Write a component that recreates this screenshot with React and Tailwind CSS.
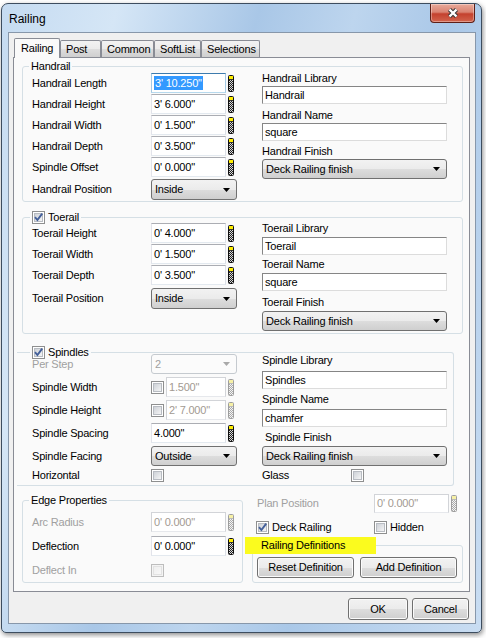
import React from 'react';

const GRAD = 'bg-[linear-gradient(#f2f2f2_0%,#ebebeb_50%,#dddddd_51%,#cfcfcf_100%)]';

function Spinner({ disabled }) {
  const dots = [];
  for (let r = 0; r < 11; r++) {
    for (let c = 0; c < 2; c++) {
      dots.push(
        <rect key={r + '-' + c} x={1 + (r % 2) + c * 2} y={5 + r} width="1" height="1" fill={disabled ? '#aaaaaa' : '#222'} />
      );
    }
  }
  return (
    <svg width="6" height="17" viewBox="0 0 6 17" className="ml-[2px] shrink-0">
      <rect x="0.5" y="0.5" width="5" height="16" rx="1" fill={disabled ? '#f4f4f4' : '#d8d8d8'} stroke={disabled ? '#9e9e9e' : '#111'} />
      <rect x="1" y="1" width="4" height="3" fill={disabled ? '#f6f0a6' : '#ffee00'} />
      <rect x="1" y="4" width="4" height="1" fill={disabled ? '#bbbbbb' : '#333'} />
      {dots}
    </svg>
  );
}

function Check({ checked, disabled }) {
  const id = disabled ? 'cbd' : 'cbn';
  return (
    <svg width="13" height="13" viewBox="0 0 13 13" className="shrink-0">
      <defs>
        <linearGradient id={id} x1="0" y1="0" x2="1" y2="1">
          <stop offset="0" stopColor={disabled ? '#eeeeee' : '#cbcfd5'} />
          <stop offset="1" stopColor={disabled ? '#f8f8f8' : '#f7f7f7'} />
        </linearGradient>
      </defs>
      <rect x="0.5" y="0.5" width="12" height="12" fill={disabled ? '#f4f4f4' : '#fff'} stroke={disabled ? '#bdbdbd' : '#8e8f8f'} />
      <rect x="2.5" y="2.5" width="8" height="8" fill={`url(#${id})`} stroke={disabled ? '#e2e2e2' : '#b8bcc2'} />
      {checked && <path d="M3 6.2L5.4 9L10.2 2.6" fill="none" stroke="#44609a" strokeWidth="1.9" />}
    </svg>
  );
}

// left column number box
function TextBox({ value, className = 'w-[75px] h-[20px]', disabled, focused, selected }) {
  let border = 'border-[#abadb3] border-l-[#e2e3ea] border-r-[#dbdfe6] border-b-[#e3e9ef]';
  if (focused) border = 'border-[#3d7bad] border-l-[#a4c9e3] border-r-[#a4c9e3] border-b-[#b7d9ed]';
  if (disabled) border = 'border-[#d2d4d8] border-b-[#e6e8ec]';
  return (
    <div className={`${className} shrink-0 flex items-center border bg-white pl-[2px] ${border} ${disabled ? 'text-[#a29a92]' : ''}`}>
      {selected ? <span className="bg-[#3399ff] text-white px-[1px] leading-[12px] py-[1px]">{value}</span> : value}
    </div>
  );
}

// right column text field
function Edit({ value, className = '' }) {
  return (
    <div className={`${className} w-[185px] h-[18px] shrink-0 flex items-center pl-[2px] bg-white border border-[#dcdcdc] border-t-[#858585] border-l-[#858585]`}>
      {value}
    </div>
  );
}

function Combo({ value, className = '', disabled }) {
  return (
    <div
      className={`${className} shrink-0 flex items-center justify-between rounded-[3px] border pl-[3px] pr-[6px] ${
        disabled ? 'border-[#c5cacf] bg-[#fbfbfb] text-[#a0a0a0]' : `border-[#707070] ${GRAD}`
      }`}
    >
      <span>{value}</span>
      <svg width="7" height="4" viewBox="0 0 7 4">
        <path d="M0 0H7L3.5 4Z" fill={disabled ? '#a9a9a9' : '#000'} />
      </svg>
    </div>
  );
}

function Btn({ children, className = '' }) {
  return (
    <div className={`${className} shrink-0 flex items-center justify-center rounded-[3px] border border-[#707070] ${GRAD} shadow-[inset_0_0_0_1px_#fbfbfb]`}>
      {children}
    </div>
  );
}

function Row({ label, disabled, children, h = 'h-[20px]', className = '' }) {
  return (
    <div className={`flex items-center ${h} ${className}`}>
      <div className={`w-[119px] shrink-0 ${disabled ? 'text-[#a0a0a0]' : ''}`}>{label}</div>
      {children}
    </div>
  );
}

function Group({ legend, className = '', children, legendClass = 'ml-[6px]' }) {
  return (
    <fieldset className={`m-0 p-0 min-w-0 border border-[#d5dfe5] rounded-[3px] ${className}`}>
      <legend className={`h-[13px] leading-[13px] px-[2px] ${legendClass}`}>{legend}</legend>
      {children}
    </fieldset>
  );
}

function Label({ children, className = '' }) {
  return <div className={`h-[13px] leading-[13px] ${className}`}>{children}</div>;
}

function Tab({ children, className = '' }) {
  return (
    <div className={`${className} h-[17px] border border-b-0 border-[#898c95] rounded-t-[2px] pl-[5px] pt-[1px] leading-[14px] ${GRAD}`}>
      {children}
    </div>
  );
}

export default function App() {
  return (
    <div className="w-[486px] h-[638px] bg-white overflow-hidden font-['Liberation_Sans',Arial,sans-serif] text-[11px] tracking-[-0.2px] text-black">
      <div className="ml-[1px] mt-[3px] w-[481px] h-[630px] rounded-t-[7px] rounded-b-[5px] border border-[#3d4d5f] bg-[linear-gradient(105deg,#c5dbf1_0%,#d5e6f6_18%,#a9c7e7_40%,#bdd5ee_55%,#aac8e8_70%,#c9ddf2_100%)] shadow-[1px_2px_5px_rgba(0,0,0,0.45)] flex flex-col">
        {/* title bar */}
        <div className="h-[28px] shrink-0 flex items-start justify-between">
          <div className="pl-[7px] pt-[8px] text-[12px] leading-[14px] tracking-normal">Railing</div>
          <div className="mr-[6px] w-[45px] h-[19px] rounded-b-[4px] border border-t-0 border-[#5e1f17] bg-[linear-gradient(#e9aa9a_0%,#da8372_45%,#c4412e_55%,#d2644d_100%)] shadow-[inset_0_0_0_1px_rgba(255,255,255,0.35)] flex items-center justify-center">
            <svg width="16" height="12" viewBox="0 0 16 12">
              <path d="M4.5 2.5L11.5 9.5M11.5 2.5L4.5 9.5" stroke="#3b3b3b" strokeWidth="4.4" />
              <path d="M4.5 2.5L11.5 9.5M11.5 2.5L4.5 9.5" stroke="#fff" strokeWidth="2.4" />
            </svg>
          </div>
        </div>

        {/* client area */}
        <div className="ml-[6px] w-[468px] h-[592px] border border-[#8797aa] bg-[#f0f0f0]">
          <div className="ml-[4px] mt-[5px] w-[457px]">
            <div className="relative z-10 flex items-end h-[19px]">
              <div className="ml-[1px] w-[46px] h-[20px] -mb-[1px] bg-[#fafafa] border border-b-0 border-[#898c95] rounded-t-[2px] pl-[6px] pt-[2px] leading-[14px]">
                Railing
              </div>
              <Tab className="w-[41px]">Post</Tab>
              <Tab className="w-[53px]">Common</Tab>
              <Tab className="w-[47px]">SoftList</Tab>
              <Tab className="w-[59px]">Selections</Tab>
            </div>

            <div className="h-[535px] border border-[#898c95] bg-[#fafafa] pt-[2px]">
              {/* Handrail */}
              <Group className="ml-[8px] w-[441px]" legend="Handrail">
                <div className="flex pl-[9px] pb-[1px]">
                  <div className="w-[230px] flex flex-col gap-[1px]">
                    <Row label="Handrail Length">
                      <TextBox focused selected value={`3' 10.250"`} />
                      <Spinner />
                    </Row>
                    <Row label="Handrail Height">
                      <TextBox value={`3' 6.000"`} />
                      <Spinner />
                    </Row>
                    <Row label="Handrail Width">
                      <TextBox value={`0' 1.500"`} />
                      <Spinner />
                    </Row>
                    <Row label="Handrail Depth">
                      <TextBox value={`0' 3.500"`} />
                      <Spinner />
                    </Row>
                    <Row label="Spindle Offset">
                      <TextBox value={`0' 0.000"`} />
                      <Spinner />
                    </Row>
                    <Row label="Handrail Position" h="h-[21px]" className="mt-[1px]">
                      <Combo className="w-[86px] h-[21px]" value="Inside" />
                    </Row>
                  </div>
                  <div className="w-[185px] flex flex-col">
                    <Label className="-mt-[1px]">Handrail Library</Label>
                    <Edit className="mt-[1px]" value="Handrail" />
                    <Label className="mt-[5px]">Handrail Name</Label>
                    <Edit className="mt-[1px]" value="square" />
                    <Label className="mt-[4px]">Handrail Finish</Label>
                    <Combo className="mt-[1px] w-[185px] h-[20px]" value="Deck Railing finish" />
                  </div>
                </div>
              </Group>

              {/* Toerail */}
              <Group
                className="ml-[8px] mt-[9px] w-[441px]"
                legendClass="ml-[7px]"
                legend={
                  <span className="inline-flex items-center gap-[3px] h-[13px]">
                    <Check checked />
                    Toerail
                  </span>
                }
              >
                <div className="flex pl-[9px] pb-[2px] -mt-[1px]">
                  <div className="w-[230px] flex flex-col gap-[1px]">
                    <Row label="Toerail Height">
                      <TextBox value={`0' 4.000"`} />
                      <Spinner />
                    </Row>
                    <Row label="Toerail Width">
                      <TextBox value={`0' 1.500"`} />
                      <Spinner />
                    </Row>
                    <Row label="Toerail Depth">
                      <TextBox value={`0' 3.500"`} />
                      <Spinner />
                    </Row>
                    <Row label="Toerail Position" h="h-[21px]" className="mt-[2px]">
                      <Combo className="w-[86px] h-[21px]" value="Inside" />
                    </Row>
                  </div>
                  <div className="w-[185px] flex flex-col">
                    <Label className="-mt-[1px]">Toerail Library</Label>
                    <Edit className="mt-[2px]" value="Toerail" />
                    <Label className="mt-[3px]">Toerail Name</Label>
                    <Edit className="mt-[2px]" value="square" />
                    <Label className="mt-[5px]">Toerail Finish</Label>
                    <Combo className="mt-[2px] w-[185px] h-[20px]" value="Deck Railing finish" />
                  </div>
                </div>
              </Group>

              {/* Spindles */}
              <Group
                className="ml-[3px] mt-[12px] w-[437px] border-l-0 rounded-l-none"
                legendClass="ml-[13px]"
                legend={
                  <span className="inline-flex items-center gap-[3px] h-[13px]">
                    <Check checked />
                    Spindles
                  </span>
                }
              >
                <div className="flex pl-[15px] pb-[3px] -mt-[5px]">
                  <div className="w-[230px] flex flex-col gap-[3px]">
                    <Row label="Per Step" disabled>
                      <Combo disabled className="w-[86px] h-[20px]" value="2" />
                    </Row>
                    <Row label="Spindle Width">
                      <Check />
                      <TextBox disabled className="ml-[2px] w-[60px] h-[20px]" value={`1.500"`} />
                      <Spinner disabled />
                    </Row>
                    <Row label="Spindle Height">
                      <Check />
                      <TextBox disabled className="ml-[2px] w-[60px] h-[20px]" value={`2' 7.000"`} />
                      <Spinner disabled />
                    </Row>
                    <Row label="Spindle Spacing">
                      <TextBox value={`4.000"`} />
                      <Spinner />
                    </Row>
                    <Row label="Spindle Facing">
                      <Combo className="w-[86px] h-[20px]" value="Outside" />
                    </Row>
                    <Row label="Horizontal" h="h-[13px]">
                      <Check />
                    </Row>
                  </div>
                  <div className="w-[185px] flex flex-col">
                    <Label>Spindle Library</Label>
                    <Edit className="mt-[4px]" value="Spindles" />
                    <Label className="mt-[4px]">Spindle Name</Label>
                    <Edit className="mt-[3px]" value="chamfer" />
                    <Label className="mt-[4px] pl-[3px]">Spindle Finish</Label>
                    <Combo className="mt-[2px] w-[185px] h-[20px]" value="Deck Railing finish" />
                    <div className="mt-[3px] h-[13px] flex items-center">
                      <div className="w-[89px]">Glass</div>
                      <Check />
                    </div>
                  </div>
                </div>
              </Group>

              {/* bottom section */}
              <div className="flex mt-[8px] ml-[8px]">
                <Group className="w-[221px]" legend="Edge Properties">
                  <div className="pl-[9px] pt-[5px] pb-[2px] flex flex-col gap-[4px]">
                    <Row label="Arc Radius" disabled>
                      <TextBox disabled value={`0' 0.000"`} />
                      <Spinner disabled />
                    </Row>
                    <Row label="Deflection">
                      <TextBox value={`0' 0.000"`} />
                      <Spinner />
                    </Row>
                    <Row label="Deflect In" disabled>
                      <Check disabled />
                    </Row>
                  </div>
                </Group>

                <div className="relative w-[220px]">
                  <div className="absolute left-[2px] top-[43px] w-[131px] h-[17px] bg-[#fbfb1e] blur-[0.6px]" />
                  <div className="flex items-center h-[19px] pl-[14px]">
                    <div className="w-[117px] text-[#a0a0a0]">Plan Position</div>
                    <TextBox disabled className="w-[75px] h-[19px]" value={`0' 0.000"`} />
                    <Spinner disabled />
                  </div>
                  <div className="flex items-center h-[13px] mt-[8px] pl-[13px]">
                    <div className="w-[118px] flex items-center gap-[3px]">
                      <Check checked />
                      Deck Railing
                    </div>
                    <div className="flex items-center gap-[3px]">
                      <Check />
                      Hidden
                    </div>
                  </div>
                  <Group
                    className="ml-[9px] mt-[5px] w-[211px]"
                    legend={<span className="relative z-10">Railing Definitions</span>}
                  >
                    <div className="flex gap-[6px] pl-[4px] pt-[5px] pb-[4px]">
                      <Btn className="w-[97px] h-[21px]">Reset Definition</Btn>
                      <Btn className="w-[97px] h-[21px]">Add Definition</Btn>
                    </div>
                  </Group>
                </div>
              </div>
            </div>
          </div>

          <div className="flex justify-end gap-[4px] mt-[6px] pr-[6px]">
            <Btn className="w-[60px] h-[22px]">OK</Btn>
            <Btn className="w-[57px] h-[22px]">Cancel</Btn>
          </div>
        </div>
      </div>
    </div>
  );
}
